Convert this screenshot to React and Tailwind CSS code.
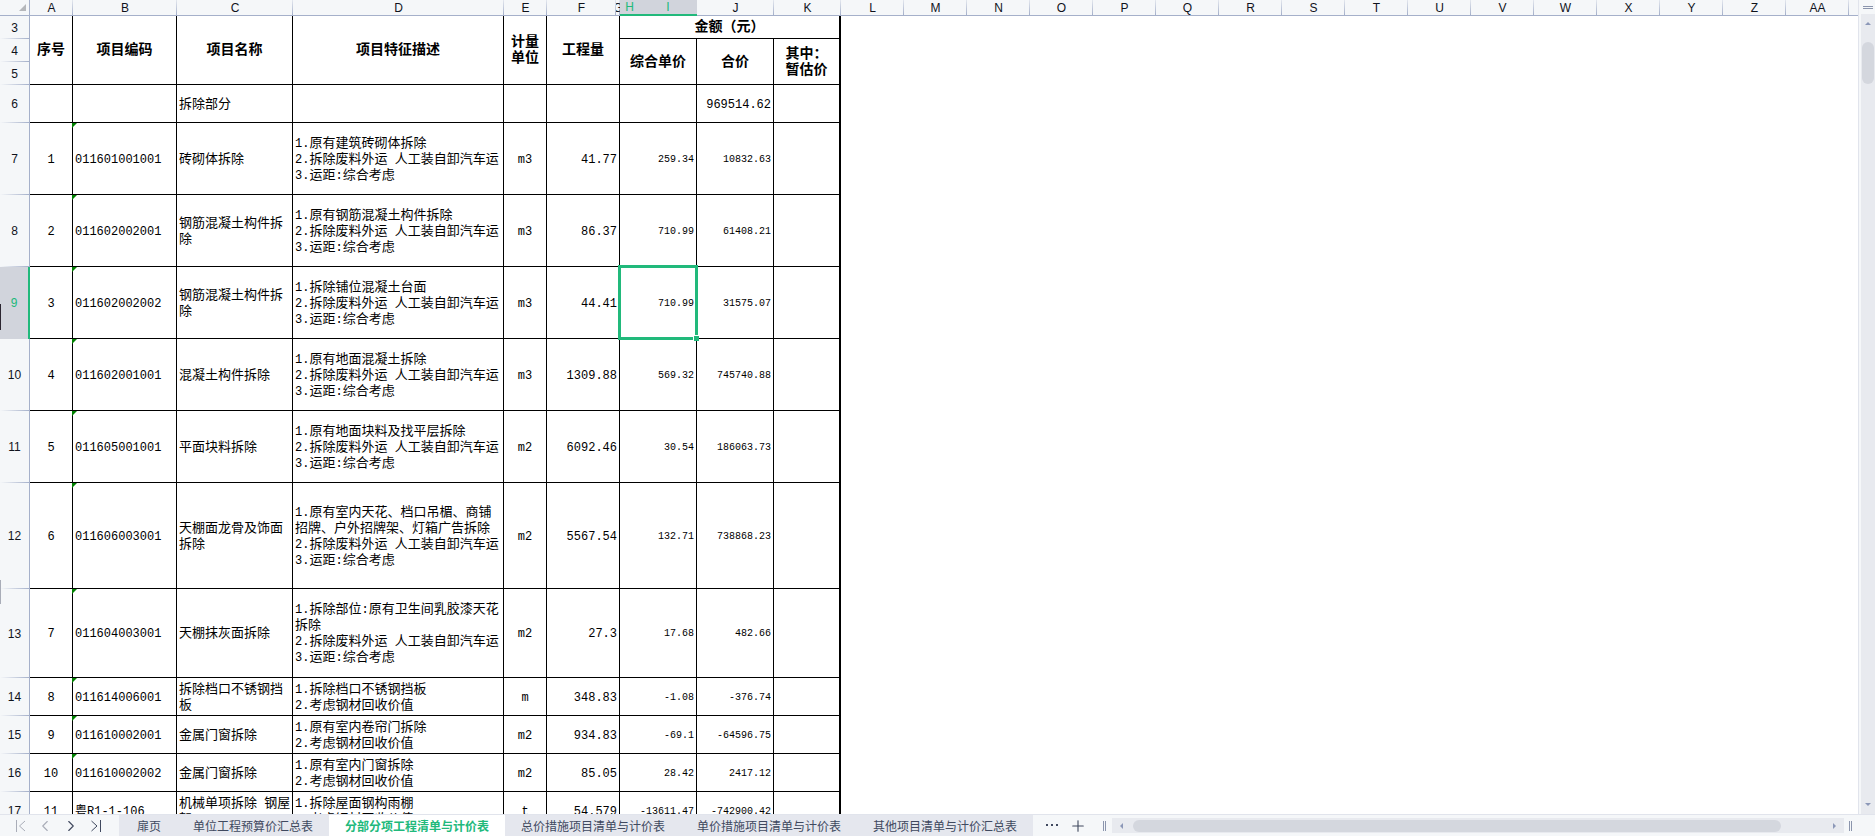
import React, { useState } from "react";
import clsx from "clsx";
import { ChevronLeft, ChevronRight, Plus } from "lucide-react";

const extraColumns = ["L", "M", "N", "O", "P", "Q", "R", "S", "T", "U", "V", "W", "X", "Y", "Z", "AA"];
const dataColumns = ["A", "B", "C", "D", "E", "F", "G", "H", "I", "J", "K"];
const selectedColumns = ["H", "I"];
const SELECTED_ROW = 9;

const removal = "2.拆除废料外运 人工装自卸汽车运";
const distance = "3.运距:综合考虑";
const recycle = "2.考虑钢材回收价值";

const rows = [
  { row: 7, height: "h-[72px]", no: "1", code: "011601001001", name: ["砖砌体拆除"], desc: ["1.原有建筑砖砌体拆除", removal, distance], unit: "m3", qty: "41.77", price: "259.34", total: "10832.63" },
  { row: 8, height: "h-[72px]", no: "2", code: "011602002001", name: ["钢筋混凝土构件拆", "除"], desc: ["1.原有钢筋混凝土构件拆除", removal, distance], unit: "m3", qty: "86.37", price: "710.99", total: "61408.21" },
  { row: 9, height: "h-[72px]", no: "3", code: "011602002002", name: ["钢筋混凝土构件拆", "除"], desc: ["1.拆除铺位混凝土台面", removal, distance], unit: "m3", qty: "44.41", price: "710.99", total: "31575.07" },
  { row: 10, height: "h-[72px]", no: "4", code: "011602001001", name: ["混凝土构件拆除"], desc: ["1.原有地面混凝土拆除", removal, distance], unit: "m3", qty: "1309.88", price: "569.32", total: "745740.88" },
  { row: 11, height: "h-[72px]", no: "5", code: "011605001001", name: ["平面块料拆除"], desc: ["1.原有地面块料及找平层拆除", removal, distance], unit: "m2", qty: "6092.46", price: "30.54", total: "186063.73" },
  { row: 12, height: "h-[106px]", no: "6", code: "011606003001", name: ["天棚面龙骨及饰面", "拆除"], desc: ["1.原有室内天花、档口吊楣、商铺", "招牌、户外招牌架、灯箱广告拆除", removal, distance], unit: "m2", qty: "5567.54", price: "132.71", total: "738868.23" },
  { row: 13, height: "h-[89px]", no: "7", code: "011604003001", name: ["天棚抹灰面拆除"], desc: ["1.拆除部位:原有卫生间乳胶漆天花", "拆除", removal, distance], unit: "m2", qty: "27.3", price: "17.68", total: "482.66" },
  { row: 14, height: "h-[38px]", no: "8", code: "011614006001", name: ["拆除档口不锈钢挡", "板"], desc: ["1.拆除档口不锈钢挡板", recycle], unit: "m", qty: "348.83", price: "-1.08", total: "-376.74" },
  { row: 15, height: "h-[38px]", no: "9", code: "011610002001", name: ["金属门窗拆除"], desc: ["1.原有室内卷帘门拆除", recycle], unit: "m2", qty: "934.83", price: "-69.1", total: "-64596.75" },
  { row: 16, height: "h-[38px]", no: "10", code: "011610002002", name: ["金属门窗拆除"], desc: ["1.原有室内门窗拆除", recycle], unit: "m2", qty: "85.05", price: "28.42", total: "2417.12" },
  { row: 17, height: "h-[38px]", no: "11", code: "粤R1-1-106", name: ["机械单项拆除 钢屋", "架"], desc: ["1.拆除屋面钢构雨棚", recycle], unit: "t", qty: "54.579", price: "-13611.47", total: "-742900.42" },
];

const sheets = [
  "扉页",
  "单位工程预算价汇总表",
  "分部分项工程清单与计价表",
  "总价措施项目清单与计价表",
  "单价措施项目清单与计价表",
  "其他项目清单与计价汇总表",
];

const cell = "border-r border-b border-black px-0 pt-[2px] pb-0";
const headCell = "border-r border-b border-black p-0 text-sm leading-4 font-bold";

const ColumnHead = ({ label }) => {
  const selected = selectedColumns.includes(label);
  return (
    <th
      scope="col"
      className={clsx(
        "h-4 overflow-hidden bg-size-[1px_100%] bg-right bg-no-repeat p-0 font-['Liberation_Sans',sans-serif] text-xs leading-[14px] font-normal",
        selected
          ? "border-b-2 border-[#21b97b] bg-[#d1d4dc] text-[#21b97b]"
          : "border-b border-[#a5b0ca] bg-[#f5f7f9] bg-[linear-gradient(to_bottom,#e3e7ee,#a5b0ca)] text-[#10131c]"
      )}
    >
      <span className="flex justify-center">{label}</span>
    </th>
  );
};

const RowHead = ({ n }) => (
  <th
    scope="row"
    className={clsx(
      "bg-size-[100%_1px] bg-bottom bg-no-repeat p-0 font-['Liberation_Sans',sans-serif] text-xs leading-4 font-normal",
      n === SELECTED_ROW
        ? "border-r-2 border-[#21b97b] bg-[#d1d4dc] text-[#21b97b]"
        : "border-r border-[#a5b0ca] bg-[#f5f7f9] bg-[linear-gradient(to_right,#f5f7f9,#a5b0ca)] text-[#10131c]"
    )}
  >
    {n}
  </th>
);

// latin runs are set one size below the Chinese text
const Lines = ({ lines }) => lines.map((line, i) => (
  <span key={i} className="block h-4 whitespace-pre">
    {line.split(/([ -~]+)/).map((part, j) => (
      j % 2 ? <span key={j} className="text-xs leading-4">{part}</span> : part
    ))}
  </span>
));

const BillRow = ({ item }) => (
  <tr className={item.height}>
    <RowHead n={item.row} />
    <td className={clsx(cell, "text-center text-xs")}>{item.no}</td>
    <td className={clsx(cell, "relative pl-[2px] text-xs")}>
      {/* text-stored-as-number marker */}
      {item.row !== 17 && (
        <span className="absolute top-0 -left-px border-t-[5px] border-r-[5px] border-t-[#008000] border-r-transparent" />
      )}
      {item.code}
    </td>
    <td className={clsx(cell, "pl-[2px]")}><Lines lines={item.name} /></td>
    <td className={clsx(cell, "pl-[2px]")}><Lines lines={item.desc} /></td>
    <td className={clsx(cell, "text-center text-xs")}>{item.unit}</td>
    <td colSpan={2} className={clsx(cell, "pr-[2px] text-right text-xs")}>{item.qty}</td>
    <td colSpan={2} className={clsx(cell, "relative pr-[2px] text-right text-[10px]")}>
      {item.price}
      {item.row === SELECTED_ROW && (
        <>
          <span className="absolute -inset-[2px] z-10 border-3 border-[#21b97b]" />
          <span className="absolute -right-[3px] -bottom-[3px] z-10 size-[6px] border-t border-l border-white bg-[#21b97b]" />
        </>
      )}
    </td>
    <td className={clsx(cell, "pr-[2px] text-right text-[10px]")}>{item.total}</td>
    <td className="border-r-2 border-b border-black p-0" />
    <td colSpan={17} className="p-0" />
  </tr>
);

const Sheet = () => (
  <table className="w-full table-fixed border-separate border-spacing-0 font-['Liberation_Mono','Noto_Sans_CJK_SC',monospace] text-[13px] leading-4 text-black">
    <colgroup>
      <col className="w-[30px]" />
      <col className="w-[43px]" />
      <col className="w-[104px]" />
      <col className="w-[116px]" />
      <col className="w-[211px]" />
      <col className="w-[43px]" />
      <col className="w-[69px]" />
      <col className="w-[4px]" />
      <col className="w-[19px]" />
      <col className="w-[58px]" />
      <col className="w-[77px]" />
      <col className="w-[67px]" />
      {extraColumns.map((c) => <col key={c} className="w-[63px]" />)}
      <col />
    </colgroup>
    <thead>
      <tr className="h-4">
        <td className="border-r border-b border-[#a5b0ca] bg-[#f5f7f9] p-0">
          <svg viewBox="0 0 7 7" className="mr-[3px] ml-auto block size-[7px]">
            <path d="M7 0v7H0z" fill="#b5b7bb" />
          </svg>
        </td>
        {[...dataColumns, ...extraColumns].map((c) => <ColumnHead key={c} label={c} />)}
        <td className="border-b border-[#a5b0ca] bg-[#f5f7f9] p-0" />
      </tr>
    </thead>
    <tbody>
      <tr className="h-[23px]">
        <RowHead n={3} />
        <th rowSpan={3} className={headCell}>序号</th>
        <th rowSpan={3} className={headCell}>项目编码</th>
        <th rowSpan={3} className={headCell}>项目名称</th>
        <th rowSpan={3} className={headCell}>项目特征描述</th>
        <th rowSpan={3} className={headCell}><Lines lines={["计量", "单位"]} /></th>
        <th rowSpan={3} colSpan={2} className={headCell}>工程量</th>
        <th colSpan={4} className="border-r-2 border-b border-black p-0 text-sm leading-4 font-bold">金额（元）</th>
        <td colSpan={17} className="p-0" />
      </tr>
      <tr className="h-[23px]">
        <RowHead n={4} />
        <th rowSpan={2} colSpan={2} className={headCell}>综合单价</th>
        <th rowSpan={2} className={headCell}>合价</th>
        <th rowSpan={2} className="border-r-2 border-b border-black p-0 text-sm leading-4 font-bold">
          <Lines lines={["其中：", "暂估价"]} />
        </th>
        <td colSpan={17} className="p-0" />
      </tr>
      <tr className="h-[23px]">
        <RowHead n={5} />
        <td colSpan={17} className="p-0" />
      </tr>
      <tr className="h-[38px]">
        <RowHead n={6} />
        <td className={cell} />
        <td className={cell} />
        <td className={clsx(cell, "pl-[2px]")}>拆除部分</td>
        <td className={cell} />
        <td className={cell} />
        <td colSpan={2} className={cell} />
        <td colSpan={2} className={cell} />
        <td className={clsx(cell, "pr-[2px] text-right text-xs")}>969514.62</td>
        <td className="border-r-2 border-b border-black p-0" />
        <td colSpan={17} className="p-0" />
      </tr>
      {rows.map((item) => <BillRow key={item.row} item={item} />)}
    </tbody>
  </table>
);

const VerticalScroll = () => (
  <div className="flex w-[17px] shrink-0 flex-col border-l border-[#e1e4ec] bg-[#f5f7f9] pl-[2px]">
    <div className="flex h-[14px] shrink-0 items-center justify-center">
      <span className="h-[3px] w-[10px] border-y border-[#8b95ad]" />
    </div>
    <div className="flex flex-1 flex-col items-center bg-[#e8eaef] pt-2 pb-2">
      <svg viewBox="0 0 6 3" className="h-[3px] w-[6px]"><path d="M3 0l3 3H0z" fill="#8c98b8" /></svg>
      <div className="mt-[17px] h-[42px] w-3 rounded-full bg-[#d4d7de]" />
      <svg viewBox="0 0 6 3" className="mt-auto h-[3px] w-[6px]"><path d="M0 0h6L3 3z" fill="#8c98b8" /></svg>
    </div>
  </div>
);

const SheetBar = () => {
  const [active, setActive] = useState(2);

  return (
    <footer className="flex h-[22px] shrink-0 items-stretch border-t border-[#e1e4ec] bg-[#f5f7f9] text-[#40495f]">
      <div className="flex w-[119px] shrink-0 items-center gap-2 pl-3">
        <button aria-label="第一张" className="text-[#a9adb8]">
          <svg viewBox="0 0 16 16" className="size-4" fill="none" stroke="currentColor"><path d="M4.5 2v12M13 3L7.500 8l5.500 5" /></svg>
        </button>
        <button aria-label="上一张" className="text-[#a9adb8]"><ChevronLeft size={18} strokeWidth={1.5} /></button>
        <button aria-label="下一张"><ChevronRight size={18} strokeWidth={1.5} /></button>
        <button aria-label="最后一张">
          <svg viewBox="0 0 16 16" className="size-4" fill="none" stroke="currentColor"><path d="M12.500 2v12M3.500 3l5.500 5-5.500 5" /></svg>
        </button>
      </div>
      <nav className="flex shrink-0 bg-[#e5e7ee] pl-[2px] font-['Noto_Sans_CJK_SC',sans-serif]">
        {sheets.map((name, i) => (
          <button
            key={name}
            onClick={() => setActive(i)}
            className={clsx("px-4 text-xs leading-5 whitespace-nowrap", i === active && "bg-white font-bold text-[#21b97b]")}
          >
            {name}
          </button>
        ))}
      </nav>
      <div className="flex shrink-0 items-center pl-[13px]">
        <button aria-label="更多工作表">
          <svg viewBox="0 0 13 3" className="h-[3px] w-[13px]" fill="currentColor">
            <path d="M0 0h2v2H0zM5 0h2v2H5zM10 0h2v2h-2z" />
          </svg>
        </button>
        <button aria-label="新建工作表" className="ml-[10px]"><Plus size={18} strokeWidth={1.5} /></button>
        <span className="ml-4 h-[10px] w-[3px] border-x border-[#8b95ad]" />
      </div>
      <div className="my-[3px] ml-[6px] flex flex-1 items-center bg-[#e8eaef] px-2">
        <svg viewBox="0 0 3 6" className="h-[6px] w-[3px]"><path d="M3 0v6L0 3z" fill="#8c98b8" /></svg>
        <div className="mr-[52px] ml-[10px] h-3 flex-1 rounded-full bg-[#d4d7de]" />
        <svg viewBox="0 0 3 6" className="h-[6px] w-[3px]"><path d="M0 0v6l3-3z" fill="#8c98b8" /></svg>
      </div>
      <span className="mr-[23px] ml-[5px] h-[10px] w-[3px] shrink-0 self-center border-x border-[#8b95ad]" />
    </footer>
  );
};

const App = () => (
  <div className="relative flex h-screen flex-col overflow-hidden bg-white">
    <div className="flex min-h-0 flex-1">
      <main className="min-w-0 flex-1 overflow-hidden">
        <Sheet />
      </main>
      <VerticalScroll />
    </div>
    <SheetBar />
    {/* side panel handles */}
    <span className="absolute top-[304px] left-0 z-10 h-[26px] w-px bg-[#2b2530]" />
    <span className="absolute top-[580px] left-0 z-10 h-6 w-px bg-[#a9adb8]" />
  </div>
);

export default App;
